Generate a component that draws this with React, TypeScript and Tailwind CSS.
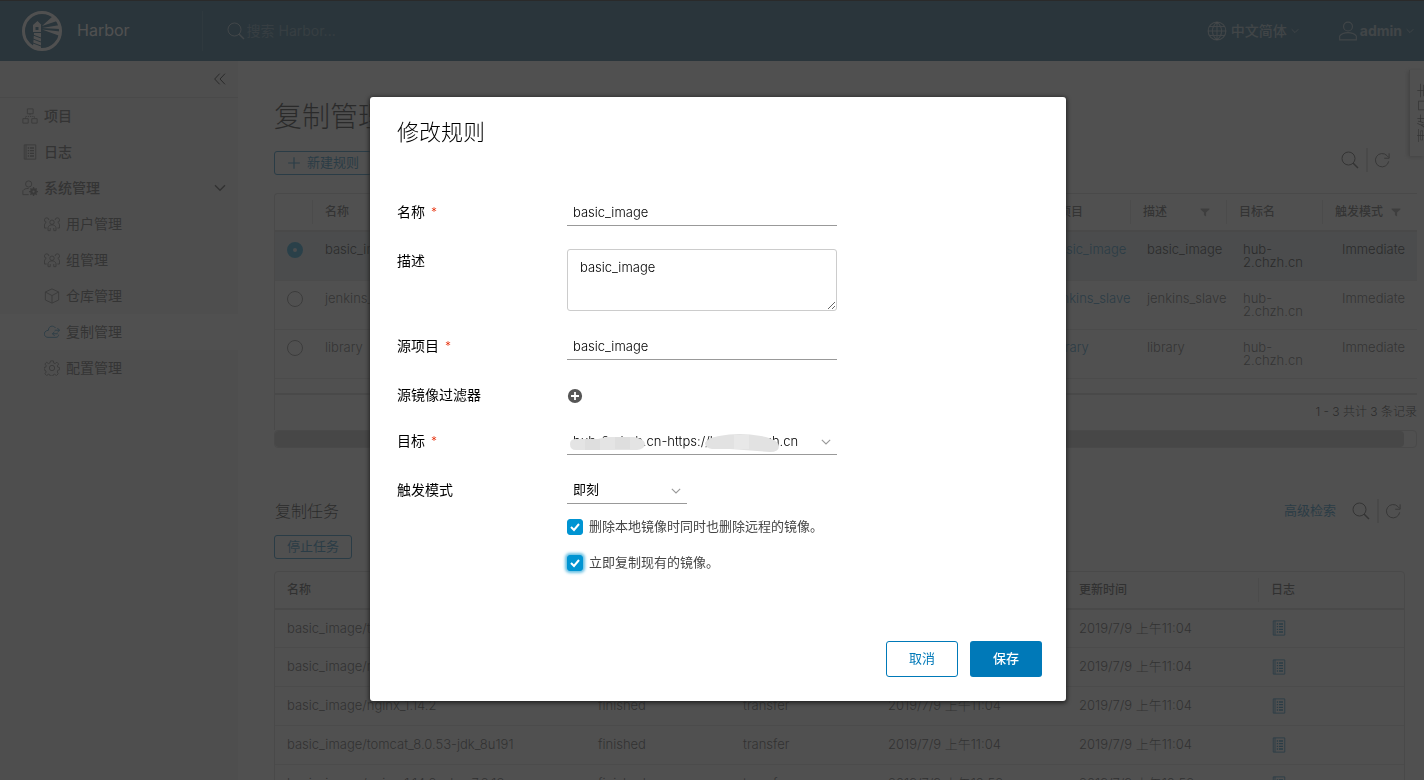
import { useState } from "react";
import type { ReactNode } from "react";

const rules = [
  { name: "basic_image", project: "basic_image", description: "basic_image", target: "hub-2.chzh.cn", mode: "Immediate" },
  { name: "jenkins_slave", project: "jenkins_slave", description: "jenkins_slave", target: "hub-2.chzh.cn", mode: "Immediate" },
  { name: "library", project: "library", description: "library", target: "hub-2.chzh.cn", mode: "Immediate" },
];

const jobs = [
  { name: "basic_image/tomcat_8.5.42", time: "2019/7/9 上午11:04" },
  { name: "basic_image/redis_5.0.5", time: "2019/7/9 上午11:04" },
  { name: "basic_image/nginx_1.14.2", time: "2019/7/9 上午11:04" },
  { name: "basic_image/tomcat_8.0.53-jdk_8u191", time: "2019/7/9 上午11:04" },
  { name: "basic_image/nginx_1.14.2-php_7.2.13", time: "2019/7/9 上午10:52" },
];

type IconProps = { className?: string; children?: ReactNode };

function Icon({ className, children }: IconProps) {
  return (
    <svg viewBox="0 0 36 36" fill="none" stroke="currentColor" strokeWidth="2" className={className} aria-hidden="true">
      {children}
    </svg>
  );
}

function SearchIcon({ className }: IconProps) {
  return (
    <Icon className={className}>
      <circle cx="15" cy="15" r="13" />
      <path d="M24 24l10 10" strokeWidth="3" />
    </Icon>
  );
}

function RefreshIcon({ className }: IconProps) {
  return (
    <Icon className={className}>
      <path d="M33 21A15 15 0 1 1 29 8l4 4" />
      <path d="M34 3v11H23" />
    </Icon>
  );
}

function AngleIcon({ className }: IconProps) {
  return (
    <Icon className={className}>
      <path d="M3 10l15 15 15-15" strokeWidth="4" />
    </Icon>
  );
}

function ListIcon({ className }: IconProps) {
  return (
    <Icon className={className}>
      <path d="M5 2h26v32H5zM9 2v32" />
      <path d="M13 9h3M18 9h9M13 15h3M18 15h9M13 21h3M18 21h9M13 27h3M18 27h9" strokeWidth="3" />
    </Icon>
  );
}

function FilterIcon() {
  return (
    <svg viewBox="0 0 36 36" fill="currentColor" className="size-[10px] text-[#888]" aria-hidden="true">
      <path d="M2 5h32v4L22 20v14l-8-4V20L2 9z" />
    </svg>
  );
}

function UsersIcon({ className }: IconProps) {
  return (
    <Icon className={className}>
      <circle cx="18" cy="14" r="5" />
      <path d="M9 33v-7c1-4 5-6 9-6s8 2 9 6v7h-5v-6M14 27v6H9" />
      <path d="M11 9a5 5 0 1 0-6 5c-2 1-3 3-4 6v7h5M25 9a5 5 0 1 1 6 5c2 1 3 3 4 6v7h-5" />
    </Icon>
  );
}

function OrganizationIcon({ className }: IconProps) {
  return (
    <Icon className={className}>
      <path d="M12 2h13v11H12zM2 24h12v10H2zM22 24h12v10H22z" />
      <path d="M18 13v5M8 24v-5h20v5" strokeDasharray="3 2" />
    </Icon>
  );
}

function AdminIcon({ className }: IconProps) {
  return (
    <Icon className={className}>
      <circle cx="15" cy="9" r="7" />
      <path d="M15 33H2v-9c3-4 7-5 13-5" />
      <circle cx="26" cy="26" r="5" strokeWidth="5" />
      <path d="M26 16v4M26 32v4M16 26h4M32 26h4M19 19l3 3M30 30l3 3M33 19l-3 3M22 30l-3 3" strokeWidth="3" />
    </Icon>
  );
}

function CubeIcon({ className }: IconProps) {
  return (
    <Icon className={className}>
      <path d="M18 2l15 7v18l-15 7-15-7V9zM3 9l15 8 15-8M18 17v17" />
    </Icon>
  );
}

function CloudIcon({ className }: IconProps) {
  return (
    <Icon className={className}>
      <path d="M26 9C21 2 10 4 10 14 3 15 0 19 1 24c1 4 4 6 8 6h18c4 0 6-3 6-6" />
      <path d="M24 14h11M30 9l5 5-5 5M31 22H19M24 17l-5 5 5 5" />
    </Icon>
  );
}

function CogIcon({ className }: IconProps) {
  return (
    <Icon className={className}>
      <circle cx="18" cy="18" r="6" />
      <path d="M15 2h6l1 5 3 1 4-3 4 4-3 4 1 3 4 1v5l-4 1-1 4 2 4-4 4-4-3-3 1-1 3h-6l-1-3-3-1-4 3-4-4 3-4-2-4-3-1v-5l4-1 1-3-3-4 4-4 4 3 3-1z" />
    </Icon>
  );
}

function HarborLogo() {
  return (
    <svg viewBox="0 0 40 40" className="size-10" aria-hidden="true">
      <circle cx="20" cy="20" r="18.500" fill="none" stroke="#fff" strokeWidth="3" />
      <path d="M11 14l4.500-4 4 4z" fill="#fff" />
      <path d="M11 14h8v7h-8z" fill="#fff" />
      <path d="M13.500 16h3v3h-3z" fill="#004a70" />
      <path d="M12 22h7v16l-8-2z" fill="#fff" />
      <path d="M11 24l8 3M11 28l8 3M11 32l8 3" stroke="#004a70" strokeWidth="1" />
      <path d="M20 15L31 5l4 5zM20 17l18-3v4zM20 18.500l18 2v4.500z" fill="#fff" />
    </svg>
  );
}

const subItems = [
  { label: "用户管理", icon: UsersIcon },
  { label: "组管理", icon: UsersIcon },
  { label: "仓库管理", icon: CubeIcon },
  { label: "复制管理", icon: CloudIcon, active: true },
  { label: "配置管理", icon: CogIcon },
];

function Header() {
  return (
    <header className="flex h-[61px] shrink-0 items-center border-t border-black bg-[#004a70] text-white">
      <a href="#" className="flex items-center pl-[22px]">
        <HarborLogo />
        <span className="pb-[2px] pl-[15px] text-base leading-5">Harbor</span>
      </a>
      <form className="ml-[72px] flex h-10 grow items-center border-l border-white/15 pl-6 text-white/60">
        <SearchIcon className="size-[18px]" />
        <input
          type="search"
          aria-label="搜索"
          placeholder="搜索 Harbor..."
          className="w-60 bg-transparent pl-[2px] text-sm outline-none placeholder:text-white/35"
        />
      </form>
      <button className="flex items-center text-sm font-medium text-white/60">
        <Icon className="mr-1 size-5">
          <circle cx="18" cy="18" r="16" />
          <path d="M18 2v32M2 18h32M5 10h26M5 26h26M18 2c-11 9-11 23 0 32M18 2c11 9 11 23 0 32" />
        </Icon>
        中文简体
        <AngleIcon className="ml-1 size-2" />
      </button>
      <button className="ml-[39px] mr-[10px] flex items-center text-sm font-bold text-white/60">
        <Icon className="mr-[2px] size-5">
          <circle cx="18" cy="10" r="8" />
          <path d="M3 34v-7c4-5 9-6 15-6s11 1 15 6v7z" />
        </Icon>
        admin
        <AngleIcon className="ml-1 size-2" />
      </button>
    </header>
  );
}

function Sidebar() {
  return (
    <nav className="w-[238px] shrink-0 bg-[#eee] text-sm text-[#454545]">
      <div className="flex h-[37px] items-center justify-end border-b border-[#ccc] pr-3">
        <button aria-label="收起" className="text-black">
          <Icon className="size-3">
            <path d="M17 2L2 18l15 16M33 2L18 18l15 16" strokeWidth="3" />
          </Icon>
        </button>
      </div>
      <a href="#" className="flex h-9 items-center gap-[6px] pl-[22px] font-medium">
        <OrganizationIcon className="size-4 text-[#666]" />
        项目
      </a>
      <a href="#" className="flex h-9 items-center gap-[6px] pl-[22px] font-medium">
        <ListIcon className="size-4 text-[#666]" />
        日志
      </a>
      <button className="flex h-9 w-full items-center gap-[6px] pl-[22px] pr-3 font-medium">
        <AdminIcon className="size-4 text-[#666]" />
        系统管理
        <AngleIcon className="ml-auto size-3 text-[#333]" />
      </button>
      {subItems.map(({ label, icon: ItemIcon, active }) => (
        <a
          key={label}
          href="#"
          className={active ? "flex h-9 items-center gap-[6px] bg-white pl-11" : "flex h-9 items-center gap-[6px] pl-11"}
        >
          <ItemIcon className={active ? "size-4 text-[#0079b8]" : "size-4 text-[#666]"} />
          {label}
        </a>
      ))}
    </nav>
  );
}

function HeadCell({ children, first }: { children?: ReactNode; first?: boolean }) {
  return (
    <th className="px-0 py-0 text-left text-xs font-medium">
      <div
        className={
          first
            ? "flex h-6 items-center justify-between pl-3 pr-4"
            : "flex h-6 items-center justify-between border-l border-[#ddd] pl-3 pr-4"
        }
      >
        {children}
      </div>
    </th>
  );
}

function RuleTable() {
  const [selected, setSelected] = useState("basic_image");

  return (
    <div className="mt-[18px]">
      <div className="rounded-tl-sm border-l border-t border-[#ccc] bg-white">
        <table className="w-full table-fixed border-collapse text-left text-[13px] leading-[13px]">
          <colgroup>
            <col className="w-[37px]" />
            <col />
            <col className="w-24" />
            <col className="w-24" />
            <col className="w-24" />
            <col className="w-[95px]" />
          </colgroup>
          <thead>
            <tr className="h-[37px] border-b-2 border-[#ccc]">
              <HeadCell first />
              <HeadCell>名称</HeadCell>
              <HeadCell>源项目</HeadCell>
              <HeadCell>描述 <FilterIcon /></HeadCell>
              <HeadCell>目标名</HeadCell>
              <HeadCell>触发模式 <FilterIcon /></HeadCell>
            </tr>
          </thead>
          <tbody>
            {rules.map((rule) => {
              const on = rule.name === selected;
              return (
                <tr
                  key={rule.name}
                  className={
                    on
                      ? "h-[49px] border-b border-[#ddd] bg-[#d9e4ea] align-top text-black"
                      : "h-[49px] border-b border-[#ddd] align-top text-[#454545]"
                  }
                >
                  <td className="pl-3 pt-[10px]">
                    <input
                      type="radio"
                      name="rule"
                      aria-label={rule.name}
                      checked={on}
                      onChange={() => setSelected(rule.name)}
                      className="size-4 appearance-none rounded-full border border-[#777] checked:border-[6px] checked:border-[#0094d2]"
                    />
                  </td>
                  <td className="pl-[13px] pt-[11px] font-light">{rule.name}</td>
                  <td className="pl-[17px] pt-[11px] font-light"><a href="#" className="text-[#0079b8]">{rule.project}</a></td>
                  <td className="pl-[17px] pt-[11px] font-light">{rule.description}</td>
                  <td className="pl-[17px] pr-2 pt-[11px] font-light">{rule.target}</td>
                  <td className="pl-5 pt-[11px] font-light">{rule.mode}</td>
                </tr>
              );
            })}
          </tbody>
        </table>
        <div className="h-4 border-b-2 border-[#ccc]"></div>
        <div className="flex h-[35px] items-center justify-end text-xs font-light text-black">1 - 3 共计 3 条记录</div>
      </div>
      <div className="rounded border border-[#ccc] pr-3">
        <div className="h-4 rounded bg-[#c1c1c1]"></div>
      </div>
    </div>
  );
}

function JobTable() {
  return (
    <div className="mr-3 mt-3 rounded-t-sm border border-[#ccc] bg-white">
      <table className="w-full table-fixed border-collapse text-left text-[13px] text-[#333]">
        <colgroup>
          <col />
          <col className="w-[145px]" />
          <col className="w-[145px]" />
          <col className="w-48" />
          <col className="w-48" />
          <col className="w-[146px]" />
        </colgroup>
        <thead>
          <tr className="h-[37px] border-b-2 border-[#ccc]">
            <HeadCell first>名称</HeadCell>
            <HeadCell>状态</HeadCell>
            <HeadCell>操作</HeadCell>
            <HeadCell>创建时间</HeadCell>
            <HeadCell>更新时间</HeadCell>
            <HeadCell>日志</HeadCell>
          </tr>
        </thead>
        <tbody>
          {jobs.map((job) => (
            <tr key={job.name} className="h-[39px] border-b border-[#ddd] font-light">
              <td className="pl-3">{job.name}</td>
              <td className="pl-[14px]">finished</td>
              <td className="pl-[14px]">transfer</td>
              <td className="pl-[14px]">{job.time}</td>
              <td className="pl-[13px]">{job.time}</td>
              <td className="pl-[13px]">
                <a href="#" aria-label="查看日志"><ListIcon className="size-4 text-[#0079b8]" /></a>
              </td>
            </tr>
          ))}
        </tbody>
      </table>
    </div>
  );
}

function Replication() {
  return (
    <main className="min-w-0 grow bg-[#fafafa] pl-9 pr-[7px] text-[#454545]">
      <h1 className="pt-9 text-[28px] font-light leading-10 text-black">复制管理</h1>
      <div className="mt-[11px] flex h-[27px] justify-between">
        <button className="flex h-6 items-center self-end rounded-[3px] border border-[#0079b8] px-3 text-[13px] text-[#0079b8]">
          <Icon className="mr-[6px] size-[14px]">
            <path d="M18 3v30M3 18h30" strokeWidth="3" />
          </Icon>
          新建规则
        </button>
        <div className="flex h-6 items-center pr-[27px] text-[#454545]">
          <button aria-label="搜索规则"><SearchIcon className="size-[18px]" /></button>
          <span className="ml-[7px] h-6 w-[2px] bg-[#ccc]"></span>
          <button aria-label="刷新规则" className="ml-[6px]"><RefreshIcon className="size-4" /></button>
        </div>
      </div>
      <RuleTable />
      <div className="mt-[51px] flex h-6 items-center justify-between">
        <h2 className="pl-px text-base font-light text-black">复制任务</h2>
        <div className="flex items-center pr-4 text-[#454545]">
          <a href="#" className="mr-4 text-[13px] text-[#0079b8]">高级检索</a>
          <button aria-label="搜索任务"><SearchIcon className="size-[18px]" /></button>
          <span className="ml-[7px] h-6 w-[2px] bg-[#ccc]"></span>
          <button aria-label="刷新任务" className="ml-[6px]"><RefreshIcon className="size-4" /></button>
        </div>
      </div>
      <button className="mt-3 flex h-6 items-center rounded-[3px] border border-[#0079b8] px-3 text-[13px] text-[#0079b8]">
        停止任务
      </button>
      <JobTable />
    </main>
  );
}

function Label({ text, id, required }: { text: string; id: string; required?: boolean }) {
  return (
    <label htmlFor={id} className="flex h-[23px] text-sm leading-6 text-black">
      {text}
      {required && <span className="ml-[6px] text-xs font-light leading-6 text-[#e62700]">*</span>}
    </label>
  );
}

const checkbox =
  "peer size-4 appearance-none rounded-[3px] border border-[#9a9a9a] checked:border-[#0094d2] checked:bg-[#0094d2]";

function Check({ label, glow }: { label: string; glow?: boolean }) {
  const [on, setOn] = useState(true);

  return (
    <label className="relative flex h-5 items-center gap-[6px] text-[13px] text-[#454545]">
      <input
        type="checkbox"
        checked={on}
        onChange={() => setOn(!on)}
        className={glow ? `${checkbox} shadow-[0_0_3px_2px_#6bc1e3]` : checkbox}
      />
      <svg viewBox="0 0 16 16" className="pointer-events-none absolute left-0 hidden size-4 peer-checked:block" aria-hidden="true">
        <path d="M4 8l3 3 5-6" fill="none" stroke="#fff" strokeWidth="2" />
      </svg>
      {label}
    </label>
  );
}

function EditRuleModal() {
  const [name, setName] = useState("basic_image");
  const [description, setDescription] = useState("basic_image");
  const [project, setProject] = useState("basic_image");

  return (
    <div className="fixed inset-0 flex justify-center bg-[#313131]/85 pb-[79px] pl-3 pt-[97px]">
      <div
        role="dialog"
        aria-label="修改规则"
        className="flex w-[696px] flex-col rounded-[3px] bg-white pb-6 pl-[27px] pr-6 pt-[21px] shadow-[0_1px_4px_1px_#222]"
      >
        <h3 className="text-[22px] font-light leading-7 text-black">修改规则</h3>
        <form className="mt-[54px] grid grid-cols-[170px_270px] gap-y-[23px] text-[13px] text-black">
          <Label text="名称" id="name" required />
          <input
            id="name"
            value={name}
            onChange={(e) => setName(e.target.value)}
            className="h-[26px] border-b border-[#999] px-[6px] pb-[2px] font-light outline-none"
          />
          <Label text="描述" id="description" />
          <textarea
            id="description"
            value={description}
            onChange={(e) => setDescription(e.target.value)}
            className="h-[62px] resize rounded-[3px] border border-[#ccc] px-3 py-[7px] font-light leading-5 outline-none"
          />
          <Label text="源项目" id="project" required />
          <input
            id="project"
            value={project}
            onChange={(e) => setProject(e.target.value)}
            className="h-[26px] border-b border-[#999] px-[6px] pb-[2px] font-light outline-none"
          />
          <Label text="源镜像过滤器" id="filter" />
          <button id="filter" type="button" aria-label="添加过滤器" className="h-[23px] w-4 pt-[2px]">
            <svg viewBox="0 0 36 36" className="size-4" aria-hidden="true">
              <circle cx="18" cy="18" r="16" fill="#565656" />
              <path d="M18 9v18M9 18h18" stroke="#fff" strokeWidth="4" />
            </svg>
          </button>
          <Label text="目标" id="target" required />
          <div className="relative">
            <select id="target" className="h-[26px] w-full appearance-none border-b border-[#999] pl-[6px] pr-6 pt-px font-light outline-none">
              <option>hub-2.chzh.cn-https://hub-2.chzh.cn</option>
            </select>
            <svg viewBox="0 0 212 18" className="pointer-events-none absolute left-[3px] top-[5px] h-[18px] w-[212px]" aria-hidden="true">
              <path d="M0 10q0-5 6-5h22l8-2h28q11 2 11 7t-8 6H6q-6 0-6-6z" fill="#e4e4e4" />
              <path d="M15 5h15v11H15zM45 3h15v12H45z" fill="#dedede" />
              <path d="M135 9q2-5 14-7 20-4 42 0 17 3 18 10 0 6-9 6l-40-3h-18q-7-1-7-6z" fill="#e2e2e2" />
              <path d="M164 1h15v14h-15z" fill="#e8e8e8" />
            </svg>
            <AngleIcon className="pointer-events-none absolute right-[6px] top-2 size-[10px] text-[#999]" />
          </div>
          <Label text="触发模式" id="mode" />
          <div>
            <div className="relative w-[120px]">
              <select id="mode" className="h-[26px] w-full appearance-none border-b border-[#999] pb-[2px] pl-[6px] outline-none">
                <option>即刻</option>
              </select>
              <AngleIcon className="pointer-events-none absolute right-[6px] top-2 size-[10px] text-[#999]" />
            </div>
            <div className="mt-[13px] flex flex-col gap-4">
              <Check label="删除本地镜像时同时也删除远程的镜像。" />
              <Check label="立即复制现有的镜像。" glow />
            </div>
          </div>
        </form>
        <div className="mt-auto flex justify-end gap-3 text-[13px]">
          <button className="h-9 w-[72px] rounded-[3px] border border-[#0079b8] text-[#0079b8]">取消</button>
          <button className="h-9 w-[72px] rounded-[3px] bg-[#0079b8] font-medium text-white">保存</button>
        </div>
      </div>
    </div>
  );
}

export default function App() {
  return (
    <div className="flex h-screen flex-col overflow-hidden font-['Inter','Noto_Sans_CJK_SC',sans-serif]">
      <Header />
      <div className="flex min-h-0 grow">
        <Sidebar />
        <Replication />
      </div>
      <aside className="fixed right-0 top-[70px] h-[86px] w-[15px] overflow-hidden border-l border-[#bbb] bg-white pl-[5px] shadow-[-1px_1px_4px_#aaa]">
        <button className="h-[86px] rotate-180 text-[15px] font-light leading-5 text-[#454545] [text-orientation:sideways] [writing-mode:vertical-rl]">
          事件日志
        </button>
      </aside>
      <EditRuleModal />
    </div>
  );
}
